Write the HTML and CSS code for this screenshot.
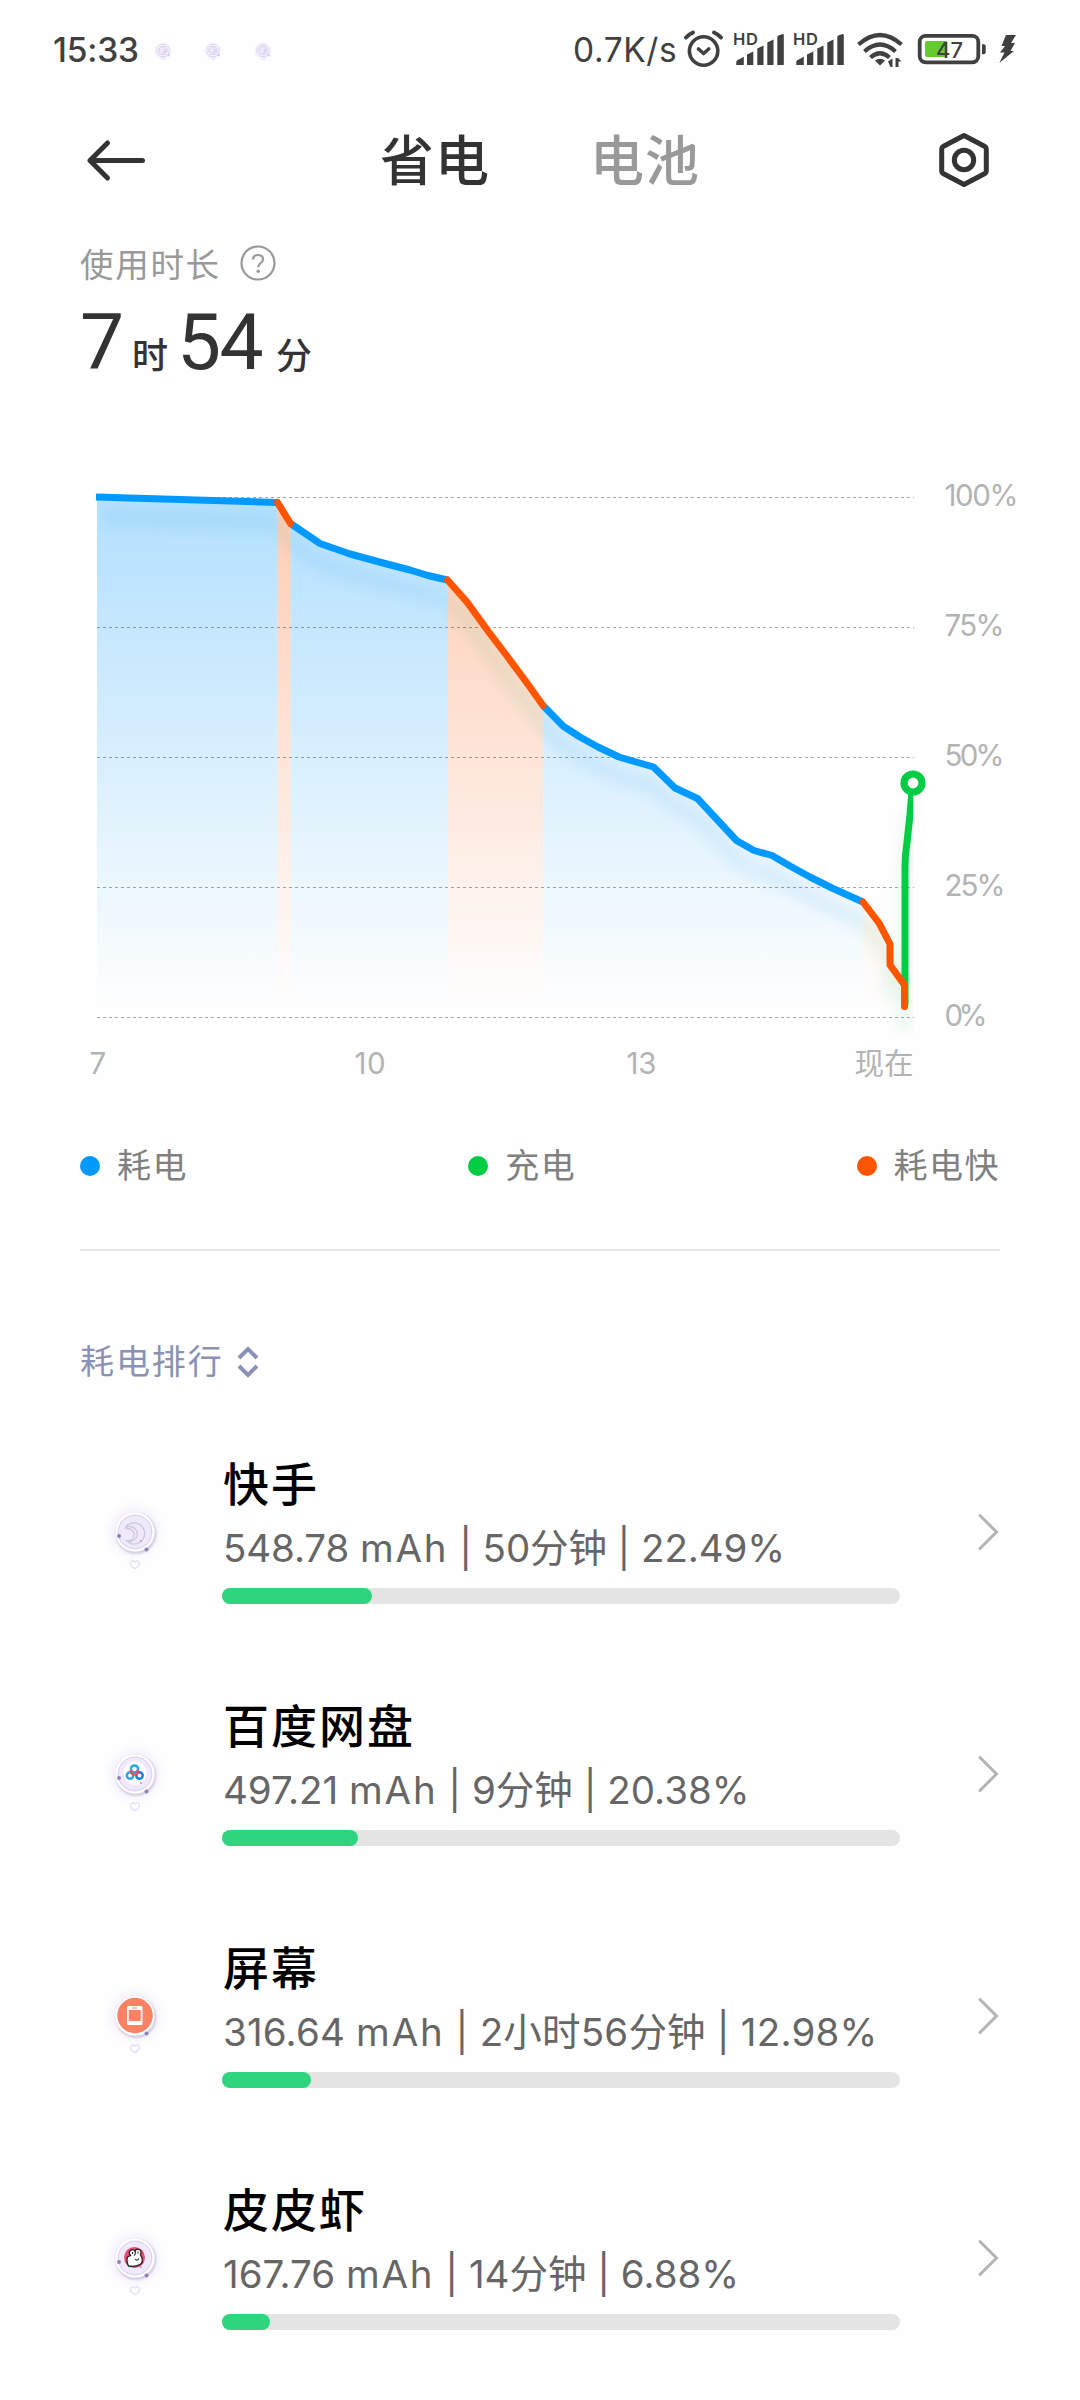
FILE: index.html
```html
<!DOCTYPE html>
<html lang="zh-CN">
<head>
<meta charset="utf-8">
<title>省电</title>
<link rel="stylesheet" href="styles.css">
</head>
<body>
<svg class="defs" width="0" height="0" aria-hidden="true">
  <defs>
    <radialGradient id="glow"><stop offset=".4" stop-color="#e6dcfb"/><stop offset="1" stop-color="#f3effd" stop-opacity="0"/></radialGradient>
    <filter id="soft" x="-30%" y="-30%" width="160%" height="160%"><feGaussianBlur stdDeviation="1.2"/></filter>
    <g id="halo">
      <circle cx="35" cy="35" r="32" fill="url(#glow)" opacity=".75"/>
      <circle cx="36" cy="36.500" r="19" fill="none" stroke="#c4bcd2" stroke-width="2" filter="url(#soft)"/>
      <circle cx="35" cy="35" r="18.500" fill="#efe9fb" stroke="#fff" stroke-width="2.200"/>
      <circle cx="35" cy="35" r="16.800" fill="none" stroke="#d9d0e8" stroke-width="1"/>
    </g>
    <g id="beads">
      <circle cx="19" cy="39" r="2" fill="#8c7fbd"/><circle cx="46.500" cy="52.500" r="2" fill="#8c7fbd"/>
      <circle cx="41" cy="44" r="1" fill="#a79bcf"/>
    </g>
    <path id="heart" d="M35 71.500c-7-3-4.500-8.500-1.500-7.500l1.500 1 1.500-1c3-1 5.500 4.500-1.500 7.500z" fill="#fff" stroke="#e8e0fa" stroke-width="1.500"/>
    <g id="mini">
      <circle cx="9" cy="10" r="10" fill="url(#glow)"/>
      <circle cx="9" cy="9.500" r="5.500" fill="#efe8fc" stroke="#fff" stroke-width="1.200"/>
      <circle cx="9" cy="9.500" r="6.200" fill="none" stroke="#cdbde6" stroke-width=".6"/>
      <circle cx="9" cy="9.500" r="4.200" fill="none" stroke="#cdbde6" stroke-width=".7"/>
      <path d="M9 12q3-1 2-4" fill="none" stroke="#c3b2e0" stroke-width=".8"/>
      <circle cx="14.500" cy="14" r="1.200" fill="#d5c8ee"/>
      <path d="M8 18h3" stroke="#e3d9f8"/>
    </g>
    <g id="bars">
      <path d="M0 31v-3q0-1 1-1.700l6.500-3.500v8.200H1zM10.700 31V20.500l6.300-3V31zM21 31V14.500l6.200-3V31zM31 31V8.500l6.200-3V31zM41 31V3q0-1 1-1.500l4.500-1.500q1 0 1 1v30z"/>
    </g>
  </defs>
</svg>

<header class="status">
  <span class="clock">15:33</span>
  <div class="notices">
    <svg width="18" height="20" viewBox="0 0 18 20" overflow="visible"><use href="#mini"/></svg>
    <svg width="18" height="20" viewBox="0 0 18 20" overflow="visible"><use href="#mini"/></svg>
    <svg width="18" height="20" viewBox="0 0 18 20" overflow="visible"><use href="#mini"/></svg>
  </div>
  <span class="speed">0.7K/s</span>
  <svg class="system" width="340" height="44" viewBox="682 26 340 44" fill="#404040">
    <g fill="none" stroke="#404040" stroke-linecap="round" stroke-linejoin="round">
      <circle cx="703.600" cy="51" r="14.200" stroke-width="3.600"/>
      <path d="M698.500 49l5.100 4.500 5.100-4.500" stroke-width="3.600"/>
      <path d="M686 37.500q2.500-3 7-5M721 37.500q-2.500-3-7-5" stroke-width="4"/>
    </g>
    <text class="hd" x="733" y="44.700" textLength="25">HD</text>
    <use href="#bars" x="736.300" y="34"/>
    <text class="hd" x="793" y="44.700" textLength="25">HD</text>
    <use href="#bars" x="796.300" y="34"/>
    <g fill="none" stroke="#404040" stroke-width="4.200">
      <path d="M858.500 44.500q21.500-19 43 0M864.500 51.500q15.500-14 31 0M870.500 57.500q9.500-8.500 19 0"/>
    </g>
    <path d="M875 60.500q5-3.500 10 0l-5 5zM888 61.500l4.500-3v8.500h-2zM895.500 67v-9h2.500l3.500 3.500h-3v5.500z"/>
    <rect x="919.700" y="35.900" width="58.600" height="26.400" rx="6" fill="none" stroke="#404040" stroke-width="3.800"/>
    <path d="M925 43q0-2 2-2h20v16h-20q-2 0-2-2z" fill="#66c92e"/>
    <path d="M982 44.300h1.700q2 0 2 2v6q0 2-2 2H982z"/>
    <text class="level" x="936" y="57.700" textLength="27">47</text>
    <path d="M1006 35h10l-5 8h4l-4.500 8h3.500l-14.700 12 5.200-10.500h-4.500l5-6.500h-3.500z"/>
  </svg>
</header>

<nav class="topbar">
  <svg class="back" width="61" height="44" viewBox="0 0 61 44" fill="none" stroke="#333" stroke-width="5" stroke-linecap="round" stroke-linejoin="round"><path d="M22.500 5L5 22.500l17.500 17.500M5 22.500h52.500"/></svg>
  <div class="tabs"><span class="tab active">省电</span><span class="tab">电池</span></div>
  <svg class="gear" width="52" height="58" viewBox="0 0 52 58" fill="none" stroke="#333" stroke-width="5" stroke-linejoin="round"><path d="M26 4.500L46 15q2.300 1 2.300 3.500v21q0 2.500-2.300 3.500L26 53.500 6 43q-2.300-1-2.300-3.500v-21Q3.700 16 6 15z"/><circle cx="26" cy="29" r="9.700"/></svg>
</nav>

<section class="usage">
  <div class="usage-label"><span>使用时长</span>
    <svg width="36" height="36" viewBox="0 0 36 36" fill="none" stroke="#999" stroke-width="2.200"><circle cx="18" cy="18" r="16.500"/><path d="M13 14.500q.3-4.500 5-4.500t5 4.200q0 2.300-2.500 4-2.300 1.600-2.300 4"/><circle cx="18.200" cy="26.300" r="1.700" fill="#999" stroke="none"/></svg>
  </div>
  <div class="usage-time"><b class="h">7</b><span class="u1">时</span><b class="m">54</b><span>分</span></div>
</section>

<svg class="chart" width="1080" height="640" viewBox="0 460 1080 640">
  <defs>
    <linearGradient id="blueFill" gradientUnits="userSpaceOnUse" x1="0" y1="497" x2="0" y2="1010"><stop offset="0" stop-color="#09f" stop-opacity=".3"/><stop offset="1" stop-color="#09f" stop-opacity="0"/></linearGradient>
    <linearGradient id="fastFill" gradientUnits="userSpaceOnUse" x1="0" y1="497" x2="0" y2="1010"><stop offset="0" stop-color="#f50" stop-opacity=".3"/><stop offset="1" stop-color="#f50" stop-opacity="0"/></linearGradient>
    <clipPath id="plot"><rect x="96" y="480" width="817.300" height="580"/></clipPath>
    <filter id="shade" filterUnits="userSpaceOnUse" x="60" y="460" width="900" height="640"><feGaussianBlur stdDeviation="6.500"/></filter>
  </defs>
  <path fill="url(#blueFill)" d="M97 497L277.500 502.500V1017H97zM290.500 523.500L320 543.500 350 554 385 563.500 410 570 428 575.500 448 580V1017H290.500zM543 705.500L563 726 580 737 598 747 619 757 653.500 767 675 788 697.500 798.500 736.500 840.500 754 850.500 772 855.500 790 866 810 877 833 888.500 863 902V1017H543z"/>
  <path fill="url(#fastFill)" d="M277.500 502.500L290.500 523.500V1017H277.500zM448 580L467 602 488 631 543 705.500V1017H448zM863 902L879 923 890 944V965L904.500 985V1017H863z"/>
  <g clip-path="url(#plot)">
    <g filter="url(#shade)" fill="none" stroke-width="15" transform="translate(0 20)" opacity=".08">
      <path stroke="#0088e0" d="M103 498L277 502.500M290.500 523.500L320 543.500 350 554 385 563.500 410 570 428 575.500 447.500 580M543 705.500L563 726 580 737 598 747 619 757 653.500 767 675 788 697.500 798.500 736.500 840.500 754 850.500 772 855.500 790 866 810 877 833 888.500 863 902"/>
      <path stroke="#00a844" d="M277 502.500L290.500 523.500M447.500 580L467 602 488 631 543 705.500M863 902L879 923 890 944V965L904.500 985V1010M905 1010V867L907 842 912 790"/>
    </g>
  </g>
  <path d="M97 497.500H914M97 627.500H914M97 757.500H914M97 887.500H914M97 1017.500H914" stroke="#000" stroke-opacity=".35" stroke-dasharray="3 3" fill="none"/>
  <g fill="none" stroke-width="7" stroke-linejoin="round">
    <path clip-path="url(#plot)" stroke="#00cc44" d="M905 1005V867Q905 855 907 842L910 815 912 790"/>
    <path stroke="#0099ff" d="M96 497L277 502.500M290.500 523.500L320 543.500 350 554 385 563.500 410 570 428 575.500 447.500 580M543 705.500L563 726 580 737 598 747 619 757 653.500 767 675 788 697.500 798.500 736.500 840.500 754 850.500 772 855.500 790 866 810 877 833 888.500 863 902"/>
    <path stroke="#ff5500" stroke-linecap="round" d="M277.500 502.500L290.500 523.500M447.500 580L467 602 488 631 507 656 527 683 543 705.500M863 902L879 923 890 944V965L904.500 985V1006.500"/>
    <circle cx="913" cy="783" r="9" fill="#fff" stroke="#00cc44" stroke-width="7.200"/>
  </g>
  <g class="axis">
    <text x="944.500" y="506" textLength="74">100%</text>
    <text x="944.500" y="636" textLength="60">75%</text>
    <text x="944.500" y="766" textLength="60">50%</text>
    <text x="944.500" y="896" textLength="61">25%</text>
    <text x="944.500" y="1026" textLength="43">0%</text>
    <text x="89.500" y="1074">7</text>
    <text x="354.500" y="1074" textLength="31">10</text>
    <text x="626.500" y="1074" textLength="30">13</text>
    <text x="854.500" y="1074" textLength="59">现在</text>
  </g>
</svg>

<div class="legend">
  <span><i class="blue"></i>耗电</span><span><i class="green"></i>充电</span><span><i class="orange"></i>耗电快</span>
</div>

<div class="sort"><span>耗电排行</span><svg width="22" height="32" viewBox="0 0 22 32" fill="none" stroke="#8a91b4" stroke-width="4"><path d="M2 12l9-9 9 9M2 20l9 9 9-9"/></svg></div>

<main class="list">
  <article class="row">
    <svg class="app" width="70" height="76" viewBox="0 0 70 76"><use href="#halo"/><path d="M25.500 30q3-4 8.500-4a10.500 10.500 0 1 1-6 19M25.500 31q2-2 4.500-1.500a7.500 7.500 0 1 1-4 14q6 1 8-3.500 1-6-4-8-2.500-.7-4.500-1z" fill="none" stroke="#d0c6e0" stroke-width="1.300"/><use href="#beads"/><use href="#heart"/></svg>
    <div class="info"><h2>快手</h2><p class="tight">548.78 <span class="unit">mAh</span> | 50分钟 | 22.49%</p><div class="track"><div class="fill" style="width:150px"></div></div></div>
    <svg class="chev" width="24" height="40" viewBox="0 0 24 40"><path d="M5 3.500l16.500 16.500L5 36.500"/></svg>
  </article>
  <article class="row">
    <svg class="app" width="70" height="76" viewBox="0 0 70 76"><use href="#halo"/><circle cx="35" cy="34" r="11.500" fill="#fff"/><g fill="none" stroke-width="2.500"><circle cx="34.500" cy="30" r="3.600" stroke="#22a9e8"/><circle cx="30" cy="36.500" r="3.200" stroke="#2ba6ea"/><circle cx="39.500" cy="36.500" r="3.200" stroke="#1684d8"/><path d="M31 31q0 4.500 3.500 4.500t3.500-4.500" stroke="#f0505c"/></g><use href="#beads"/><use href="#heart"/></svg>
    <div class="info"><h2>百度网盘</h2><p>497.21 <span class="unit">mAh</span> | 9分钟 | 20.38%</p><div class="track"><div class="fill" style="width:136px"></div></div></div>
    <svg class="chev" width="24" height="40" viewBox="0 0 24 40"><path d="M5 3.500l16.500 16.500L5 36.500"/></svg>
  </article>
  <article class="row">
    <svg class="app" width="70" height="76" viewBox="0 0 70 76"><use href="#halo"/><use href="#beads"/><circle cx="35" cy="34.500" r="18.500" fill="#fb8262" stroke="#fff" stroke-width="1.500"/><path fill="#fff" fill-rule="evenodd" d="M28.500 25h12.500q1.500 0 1.500 1.500v16q0 1.500-1.500 1.500H28.500q-1.500 0-1.500-1.500v-16q0-1.500 1.500-1.500zm.3 4v11h12V29zM32 26.500v1h5v-1z"/><use href="#heart"/></svg>
    <div class="info"><h2>屏幕</h2><p class="loose">316.64 <span class="unit">mAh</span> | 2小时56分钟 | 12.98%</p><div class="track"><div class="fill" style="width:89px"></div></div></div>
    <svg class="chev" width="24" height="40" viewBox="0 0 24 40"><path d="M5 3.500l16.500 16.500L5 36.500"/></svg>
  </article>
  <article class="row">
    <svg class="app" width="70" height="76" viewBox="0 0 70 76"><use href="#halo"/><circle cx="34.500" cy="34.500" r="10.500" fill="#ea4b70"/><path d="M27.500 34l3-1.500q-2.500-3 0-5t4.500.5q1-2.500 4-1.500t1.500 5.500q3 4.500 1 8.500-5 4-13 2.500-2.500-5-1-9z" fill="#fff" stroke="#222" stroke-width="1.300"/><path d="M35 36q2 2.500 4-.5M32.500 29v2M38 28.500v2M35 28q1 3-1 4.500" fill="none" stroke="#222" stroke-width="1.100"/><use href="#beads"/><use href="#heart"/></svg>
    <div class="info"><h2>皮皮虾</h2><p>167.76 <span class="unit">mAh</span> | 14分钟 | 6.88%</p><div class="track"><div class="fill" style="width:48px"></div></div></div>
    <svg class="chev" width="24" height="40" viewBox="0 0 24 40"><path d="M5 3.500l16.500 16.500L5 36.500"/></svg>
  </article>
</main>
</body>
</html>
```
FILE: styles.css
```css
* { box-sizing: border-box; }
body {
  margin: 0;
  width: 1080px;
  height: 2400px;
  overflow: hidden;
  background: #fefefe;
  color: #333;
  font-family: Inter, "Noto Sans CJK SC", sans-serif;
}
svg { display: block; flex: none; }
.defs { position: absolute; }

.status {
  height: 100px;
  padding: 26px 0 0 53px;
  display: flex;
  align-items: flex-start;
  color: #404040;
  white-space: nowrap;
}
.clock, .speed { flex: none; font-size: 33.5px; line-height: 48px; }
.clock { width: 101px; font-weight: 500; letter-spacing: -0.2px; }
.notices { flex: none; display: flex; gap: 32px; width: 419px; padding-top: 15px; }
.speed { width: 109px; font-weight: 400; letter-spacing: 0.6px; }
.hd { font-size: 16.5px; font-weight: 600; }
.level { font-size: 22px; font-weight: 500; }

.topbar {
  height: 120px;
  padding: 0 90px 0 85px;
  display: flex;
  align-items: center;
  justify-content: space-between;
}
.tabs { display: flex; gap: 100px; margin: 4px 4px 0 0; }
.tab { font-size: 54px; line-height: 80px; font-weight: 500; letter-spacing: 1px; color: #999; }
.tab.active { color: #333; }

.usage { height: 240px; padding: 19px 80px 0; }
.usage-label {
  height: 48px;
  display: flex;
  align-items: center;
  gap: 19px;
  font-size: 33.5px;
  letter-spacing: 1.7px;
  color: #999;
}
.usage-label span { margin-top: -1px; }
.usage-time {
  height: 100px;
  display: flex;
  align-items: baseline;
  line-height: 110px;
  font-size: 36px;
  font-weight: 500;
}
.usage-time b { font-family: Roboto, sans-serif; font-size: 78.5px; font-weight: 400; }
.usage-time .h { width: 52px; }
.usage-time .u1 { width: 45px; }
.usage-time .m { width: 99px; letter-spacing: -1.5px; }

.axis { fill: #b3b3b3; font-size: 29.5px; font-weight: 400; }

.legend {
  height: 151px;
  margin: 0 80px;
  padding-top: 42px;
  display: flex;
  align-items: flex-start;
  justify-content: space-between;
  border-bottom: 2px solid #e5e5e5;
  font-size: 34px;
  line-height: 48px;
  letter-spacing: 1.5px;
  color: #808080;
}
.legend span { display: flex; align-items: center; gap: 17px; white-space: nowrap; }
.legend i { width: 20px; height: 20px; border-radius: 50%; }
.blue { background: #0099ff; }
.green { background: #00cc44; }
.orange { background: #ff5500; }

.sort {
  height: 146px;
  padding: 76px 80px 0;
  display: flex;
  align-items: center;
  gap: 13px;
  font-size: 34px;
  line-height: 48px;
  letter-spacing: 1.9px;
  color: #8a91b4;
}

.list { padding: 36px 81px 0 100px; }
.row { height: 242px; display: flex; align-items: flex-start; }
.app { margin-top: 64px; }
.info { width: 678px; margin-left: 52px; padding-top: 18px; }
.info h2 { margin: 0; padding-left: 1px; font-size: 46px; line-height: 66px; font-weight: 500; letter-spacing: 2px; color: #000; }
.info p { margin: 0; padding-left: 1px; height: 60px; font-size: 38.5px; line-height: 62px; color: #666; white-space: nowrap; }
.info .tight { letter-spacing: -0.1px; }
.info .loose { letter-spacing: 0.2px; }
.info .unit { letter-spacing: 1.8px; }
.track { margin-top: 11px; height: 16px; border-radius: 8px; background: #e4e4e4; }
.fill { height: 16px; border-radius: 8px; background: #2ed57f; }
.chev { margin: 79px 0 0 auto; fill: none; stroke: #b3b3b3; stroke-width: 3px; stroke-linecap: round; }
```
